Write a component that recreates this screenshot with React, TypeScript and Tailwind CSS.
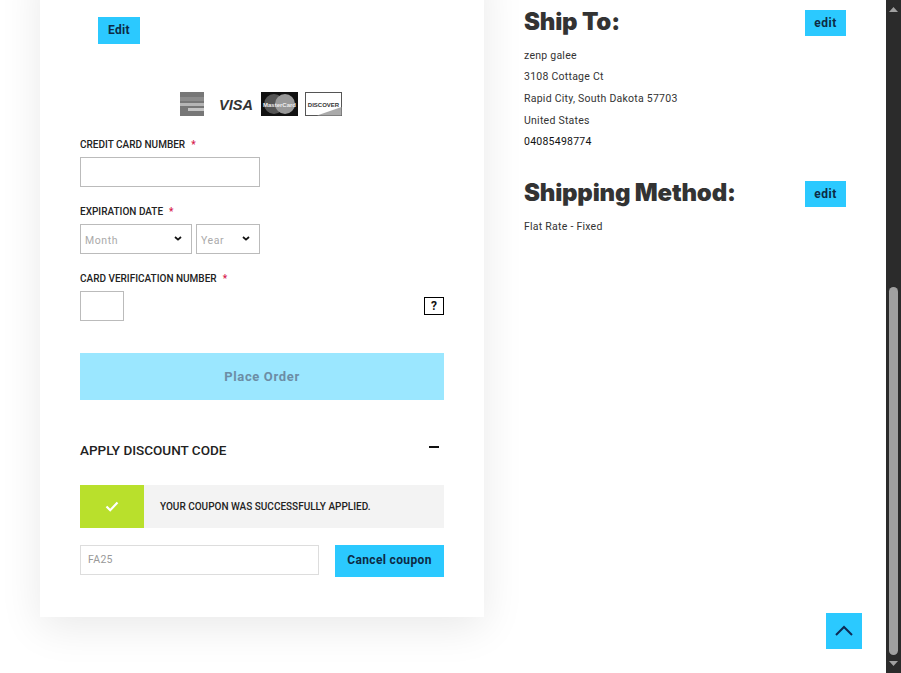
const roboto = { fontFamily: 'Roboto, "Liberation Sans", sans-serif' };

function Label({ children }: { children: string }) {
  return (
    <div className="flex h-[13px] items-center gap-[6px] text-[10px] font-medium uppercase leading-[13px] text-[#222]">
      <span>{children}</span>
      <span className="text-[#d6174a]">*</span>
    </div>
  );
}

function Chevron() {
  return (
    <svg width="8" height="5" viewBox="0 0 8 5" className="mb-[3px] shrink-0">
      <path d="M1 1l3 2.6L7 1" fill="none" stroke="#111" strokeWidth="1.8" />
    </svg>
  );
}

function CardLogos() {
  return (
    <div className="ml-[100px] flex h-[24px] items-center">
      <div className="flex h-[24px] w-[24px] flex-col justify-center gap-[2px] bg-[#777]">
        <div className="h-[4px] bg-[#8c8c8c]" />
        <div className="h-[3px] bg-[#b5b5b5]" />
        <div className="ml-[8px] h-[3px] bg-[#c4c4c4]" />
      </div>
      <svg width="36" height="24" viewBox="0 0 36 24" className="ml-[14px]">
        <text x="18" y="18" textAnchor="middle" fontFamily="Liberation Sans" fontSize="14.5" fontWeight="700" fontStyle="italic" fill="#333">VISA</text>
      </svg>
      <svg width="37" height="24" viewBox="0 0 37 24" className="ml-[7px]">
        <rect width="37" height="24" fill="#111" />
        <circle cx="13" cy="12" r="10" fill="#555" />
        <circle cx="24" cy="12" r="10" fill="#999" />
        <text x="18.5" y="14.5" textAnchor="middle" fontFamily="Liberation Sans" fontSize="6" fontWeight="700" fill="#eee">MasterCard</text>
      </svg>
      <svg width="37" height="24" viewBox="0 0 37 24" className="ml-[7px]">
        <rect x="0.5" y="0.5" width="36" height="23" fill="#fff" stroke="#555" />
        <path d="M12 23.5L36.5 15v8.5z" fill="#aaa" />
        <text x="18.5" y="14.5" textAnchor="middle" fontFamily="Liberation Sans" fontSize="6" fontWeight="700" fill="#333">DISCOVER</text>
      </svg>
    </div>
  );
}

function EditButton({ className }: { className: string }) {
  return (
    <button className={`flex h-[26px] w-[41px] items-center justify-center bg-[#2bc9ff] text-[12px] font-bold tracking-[0.5px] text-[#0d2b45] ${className}`}>
      edit
    </button>
  );
}

function Info({ children, dark }: { children: string; dark?: boolean }) {
  return (
    <div className={`h-[21.7px] text-[10.5px] leading-[21.7px] tracking-[0.25px] ${dark ? 'text-[#111]' : 'text-[#333]'}`}>
      {children}
    </div>
  );
}

export default function App() {
  return (
    <div className="relative flex h-[673px] w-[901px] overflow-hidden bg-white" style={roboto}>
      <div className="flex min-w-0 flex-1">
        <div className="ml-[40px] mt-[-40px] h-[657px] w-[444px] shrink-0 bg-white px-[40px] pt-[57px] shadow-[0_10px_40px_rgba(0,0,0,0.09)]">
          <button className="ml-[18px] flex h-[27px] w-[42px] items-center justify-center bg-[#2bc9ff] pb-[1px] text-[12px] font-bold tracking-[0.3px] text-[#0d2b45]">
            Edit
          </button>
          <div className="mt-[48px]">
            <CardLogos />
          </div>

          <div className="mt-[22px]">
            <Label>Credit Card Number</Label>
          </div>
          <input className="mt-[6px] block h-[30px] w-[180px] border border-[#bbb] bg-white" />

          <div className="mt-[18px]">
            <Label>Expiration Date</Label>
          </div>
          <div className="mt-[6px] flex gap-[4px]">
            <div className="flex h-[30px] w-[112px] items-center justify-between border border-[#bbb] pl-[4px] pr-[9px] pt-[1px] text-[10.5px] tracking-[0.6px] text-[#aaa]">
              <span className="mt-[2px]">Month</span>
              <Chevron />
            </div>
            <div className="flex h-[30px] w-[64px] items-center justify-between border border-[#bbb] pl-[4px] pr-[9px] pt-[1px] text-[10.5px] tracking-[0.6px] text-[#aaa]">
              <span className="mt-[2px]">Year</span>
              <Chevron />
            </div>
          </div>

          <div className="mt-[18px]">
            <Label>Card Verification Number</Label>
          </div>
          <div className="mt-[6px] flex items-center justify-between">
            <input className="block h-[30px] w-[44px] border border-[#bbb] bg-white" />
            <div className="flex h-[18px] w-[20px] items-center justify-center border border-black text-[12px] font-bold leading-none text-[#111]">
              ?
            </div>
          </div>

          <button className="mt-[32px] flex h-[47px] w-[364px] items-center justify-center bg-[#9be7ff] text-[13px] font-bold tracking-[0.65px] text-[#6c8da5]">
            Place Order
          </button>

          <div className="mt-[41px] flex h-[18px] items-center justify-between">
            <span className="text-[13.5px] font-medium uppercase text-[#222]">Apply Discount Code</span>
            <span className="mb-[6px] mr-[5px] h-[2px] w-[10px] bg-[#111]" />
          </div>

          <div className="mt-[26px] flex h-[43px] w-[364px] items-center bg-[#f3f3f3]">
            <div className="flex h-[43px] w-[64px] items-center justify-center bg-[#b9e02c]">
              <svg width="14" height="11" viewBox="0 0 14 11">
                <path d="M1.5 5.5l3.7 3.7L12.5 1.5" fill="none" stroke="#fff" strokeWidth="2.2" />
              </svg>
            </div>
            <span className="ml-[16px] text-[10px] font-medium uppercase text-[#222]">
              Your coupon was successfully applied.
            </span>
          </div>

          <div className="mt-[17px] flex items-start justify-between">
            <div className="flex h-[30px] w-[239px] items-center border border-[#ddd] pl-[7px] text-[10.5px] tracking-[0.3px] text-[#999]">
              FA25
            </div>
            <button className="flex h-[32px] w-[109px] items-center justify-center bg-[#2bc9ff] pb-[2px] text-[12px] font-bold tracking-[0.35px] text-[#0d2b45]">
              Cancel coupon
            </button>
          </div>
        </div>

        <div className="ml-[40px] w-[322px] shrink-0 pt-[5px]">
          <div className="flex items-start justify-between">
            <h2 className="text-[24px] font-black leading-[34px] tracking-[-0.2px] text-[#333]" style={{ fontFamily: 'Inter, sans-serif' }}>
              Ship To:
            </h2>
            <EditButton className="mt-[5px]" />
          </div>
          <div className="mt-[5.5px]">
            <Info>zenp galee</Info>
            <Info>3108 Cottage Ct</Info>
            <Info>Rapid City, South Dakota 57703</Info>
            <Info>United States</Info>
            <Info dark>04085498774</Info>
          </div>
          <div className="mt-[23px] flex items-start justify-between">
            <h2 className="text-[24px] font-black leading-[34px] tracking-[-0.2px] text-[#333]" style={{ fontFamily: 'Inter, sans-serif' }}>
              Shipping Method:
            </h2>
            <EditButton className="mt-[5.5px] h-[25px]" />
          </div>
          <div className="mt-[6px]">
            <Info>Flat Rate - Fixed</Info>
          </div>
        </div>
      </div>

      <div className="flex w-[15px] shrink-0 flex-col items-center bg-[#2b2b2b] py-[6px]">
        <svg width="9" height="5" viewBox="0 0 9 5" className="mt-[1px]">
          <path d="M0 5l4.5-5L9 5z" fill="#a0a0a0" />
        </svg>
        <div className="mt-auto mb-[6px] h-[368px] w-[9px] rounded-[5px] bg-[#a0a0a0]" />
        <svg width="9" height="5" viewBox="0 0 9 5" className="mb-[1px]">
          <path d="M0 0l4.5 5L9 0z" fill="#a0a0a0" />
        </svg>
      </div>

      <button className="absolute left-[826px] top-[613px] flex h-[36px] w-[36px] items-center justify-center bg-[#2bc9ff] pb-[2px]">
        <svg width="18" height="11" viewBox="0 0 18 11">
          <path d="M1 10l8-8 8 8" fill="none" stroke="#0d2b55" strokeWidth="2" />
        </svg>
      </button>
    </div>
  );
}
